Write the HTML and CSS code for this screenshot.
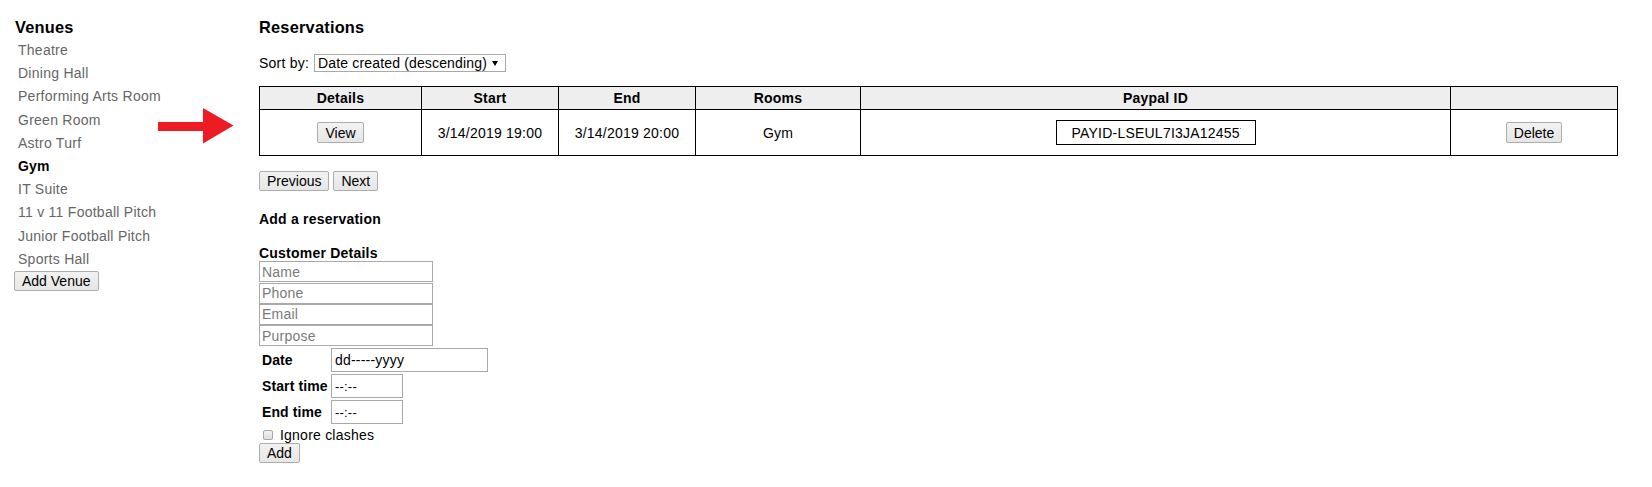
FILE: index.html
```html
<!DOCTYPE html>
<html lang="en">
<head>
<meta charset="utf-8">
<title>Reservations</title>
<link rel="stylesheet" href="styles.css">
</head>
<body>
<div class="page">
  <aside class="sidebar">
    <h3 class="heading venues-title">Venues</h3>
    <ul class="venue-list">
      <li>Theatre</li>
      <li>Dining Hall</li>
      <li>Performing Arts Room</li>
      <li>Green Room</li>
      <li>Astro Turf</li>
      <li class="active">Gym</li>
      <li>IT Suite</li>
      <li>11 v 11 Football Pitch</li>
      <li>Junior Football Pitch</li>
      <li>Sports Hall</li>
    </ul>
    <button class="btn btn-block">Add Venue</button>
  </aside>

  <main class="main">
    <h3 class="heading">Reservations</h3>
    <div class="sort-row">
      <span>Sort by:</span>
      <span class="select-wrap">
        <select class="select"><option>Date created (descending)</option></select>
        <span class="caret"></span>
      </span>
    </div>

    <table class="res-table">
      <colgroup>
        <col class="c-details">
        <col class="c-start">
        <col class="c-end">
        <col class="c-rooms">
        <col class="c-paypal">
        <col class="c-action">
      </colgroup>
      <thead>
        <tr><th>Details</th><th>Start</th><th>End</th><th>Rooms</th><th>Paypal ID</th><th></th></tr>
      </thead>
      <tbody>
        <tr>
          <td><button class="btn">View</button></td>
          <td>3/14/2019 19:00</td>
          <td>3/14/2019 20:00</td>
          <td>Gym</td>
          <td><input class="paypal-input" type="text" value="PAYID-LSEUL7I3JA124557X02931G" readonly></td>
          <td><button class="btn">Delete</button></td>
        </tr>
      </tbody>
    </table>

    <div class="pager">
      <button class="btn">Previous</button>
      <button class="btn">Next</button>
    </div>

    <h4 class="sub-title">Add a reservation</h4>
    <div class="field-title">Customer Details</div>
    <input class="text-input" type="text" placeholder="Name">
    <input class="text-input" type="text" placeholder="Phone">
    <input class="text-input" type="text" placeholder="Email">
    <input class="text-input" type="text" placeholder="Purpose">

    <div class="time-grid">
      <label class="grid-label">Date</label>
      <input class="field date-field" type="text" value="dd-----yyyy">
      <label class="grid-label">Start time</label>
      <input class="field time-field" type="text" value="--:--">
      <label class="grid-label">End time</label>
      <input class="field time-field" type="text" value="--:--">
    </div>

    <label class="check-row"><input class="check" type="checkbox">Ignore clashes</label>
    <button class="btn btn-block">Add</button>
  </main>
</div>

<svg class="arrow" width="76" height="36" viewBox="0 0 76 36" aria-hidden="true">
  <path d="M0 14 H45 V0 L75.5 17.5 L45 35.5 V23 H0 Z" fill="#ed1c24"/>
</svg>
</body>
</html>
```

FILE: styles.css
```css
html, body {
  margin: 0;
  padding: 0;
  background: #fff;
}

body {
  font-family: "Liberation Sans", Arial, sans-serif;
  font-size: 14px;
  line-height: 16px;
  letter-spacing: 0.22px;
  color: #000;
}

.page {
  display: flex;
  align-items: flex-start;
}

.sidebar {
  flex: none;
  width: 259px;
  box-sizing: border-box;
  padding: 18px 0 0 14px;
}

.heading {
  margin: 0;
  font-size: 16.38px;
  line-height: 19px;
  font-weight: bold;
}

.venues-title {
  padding-left: 1px;
  margin-bottom: 2px;
}

.venue-list {
  list-style: none;
  margin: 0;
  padding: 0 0 0 4px;
}

.venue-list li {
  line-height: 23.2px;
  color: #666;
  letter-spacing: 0.26px;
}

.venue-list li.active {
  color: #000;
  font-weight: bold;
  letter-spacing: 0.22px;
}

.btn {
  font-family: "Liberation Sans", Arial, sans-serif;
  font-size: 14px;
  line-height: 16px;
  letter-spacing: 0;
  height: 20px;
  box-sizing: border-box;
  padding: 1px 7px;
  margin: 0;
  color: #000;
  border: 1px solid #adadad;
  border-radius: 2px;
  background: linear-gradient(#f2f2f2, #e6e6e6);
}

.btn-block {
  display: block;
}

.main {
  flex: 1;
  padding-top: 18px;
}

.sort-row {
  display: flex;
  align-items: center;
  gap: 5px;
  height: 18px;
  margin-top: 17px;
}

.select-wrap {
  display: inline-flex;
  align-items: center;
  width: 192px;
  height: 18px;
  box-sizing: border-box;
  border: 1px solid #a9a9a9;
  background: #fff;
}

.select {
  -webkit-appearance: none;
  appearance: none;
  flex: 0 0 174px;
  width: 174px;
  border: 0;
  margin: 0;
  padding: 0 0 0 3px;
  background: transparent;
  font-family: "Liberation Sans", Arial, sans-serif;
  font-size: 14px;
  line-height: 16px;
  letter-spacing: 0.16px;
  color: #000;
  outline: none;
}

.caret {
  width: 0;
  height: 0;
  margin-left: 3px;
  border-left: 3px solid transparent;
  border-right: 3px solid transparent;
  border-top: 5px solid #000;
}

.res-table {
  margin-top: 14px;
  border-collapse: collapse;
  table-layout: fixed;
  width: 1358px;
}

.c-details { width: 162px; }
.c-start { width: 137px; }
.c-end { width: 137px; }
.c-rooms { width: 165px; }
.c-paypal { width: 590px; }
.c-action { width: 167px; }

.res-table th,
.res-table td {
  border: 1px solid #000;
  padding: 0;
  text-align: center;
  vertical-align: middle;
}

.res-table th {
  background: #eee;
  font-weight: bold;
  height: 22px;
  line-height: 22px;
}

.res-table td {
  height: 45px;
}

.res-table td .btn {
  height: 21px;
}

.paypal-input {
  display: block;
  margin: 0 auto;
  width: 200px;
  height: 25px;
  box-sizing: border-box;
  border: 1px solid #000;
  padding: 0 14px 0 15px;
  font-family: "Liberation Sans", Arial, sans-serif;
  font-size: 14px;
  letter-spacing: 0.22px;
  color: #000;
  background: #fff;
  outline: none;
}

.pager {
  display: flex;
  gap: 4px;
  margin-top: 15px;
}

.sub-title {
  margin: 19.5px 0 18.6px;
  font-size: 14px;
  line-height: 16px;
  font-weight: bold;
}

.field-title {
  font-weight: bold;
}

.text-input {
  display: block;
  width: 174px;
  height: 21px;
  box-sizing: border-box;
  margin: 0 0 0.45px;
  padding: 0 2px;
  border: 1px solid #a9a9a9;
  font-family: "Liberation Sans", Arial, sans-serif;
  font-size: 14px;
  letter-spacing: 0.22px;
  color: #000;
  background: #fff;
}

.text-input::placeholder {
  color: #7a7a7a;
}

.time-grid {
  display: grid;
  grid-template-columns: 70px auto;
  column-gap: 2px;
  row-gap: 2px;
  margin-top: 2px;
  align-items: center;
  justify-items: start;
}

.grid-label {
  font-weight: bold;
  padding-left: 3px;
  white-space: nowrap;
  letter-spacing: 0.1px;
}

.field {
  height: 24px;
  box-sizing: border-box;
  margin: 0;
  padding: 0 3px;
  border: 1px solid #a9a9a9;
  font-family: "Liberation Sans", Arial, sans-serif;
  font-size: 14px;
  letter-spacing: 0.2px;
  color: #000;
  background: #fff;
}

.date-field { width: 157px; }
.time-field { width: 72px; font-size: 13px; }

.check-row {
  display: flex;
  align-items: center;
  height: 17px;
  margin-top: 2px;
}

.check {
  -webkit-appearance: none;
  appearance: none;
  width: 10px;
  height: 10px;
  box-sizing: border-box;
  margin: 0 7px 0 4px;
  border: 1px solid #a8a8a8;
  border-radius: 2px;
  background: linear-gradient(#f3f3f3, #dedede);
}

.arrow {
  position: absolute;
  left: 158px;
  top: 108px;
}
```
